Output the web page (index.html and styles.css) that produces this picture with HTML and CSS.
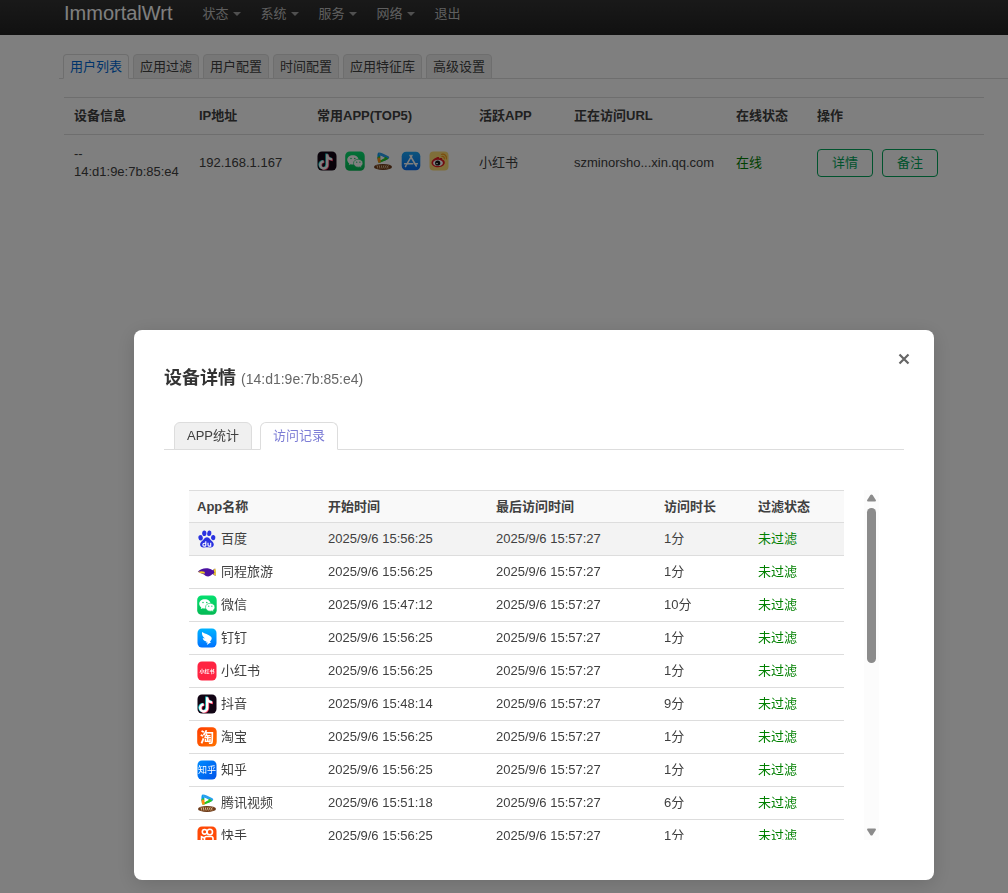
FILE: index.html
```html
<!DOCTYPE html>
<html lang="zh-CN">
<head>
<meta charset="utf-8">
<title>ImmortalWrt</title>
<link rel="stylesheet" href="styles.css">
</head>
<body>
<svg width="0" height="0" class="defs" aria-hidden="true">
  <defs>
    <linearGradient id="g-green" x2="0" y2="1"><stop stop-color="#05e070"/><stop offset="1" stop-color="#04b954"/></linearGradient>
    <linearGradient id="g-blue" x2="0" y2="1"><stop stop-color="#19a9fb"/><stop offset="1" stop-color="#0a6cf0"/></linearGradient>
    <linearGradient id="g-ding" x2="0" y2="1"><stop stop-color="#00b4ff"/><stop offset="1" stop-color="#0072ff"/></linearGradient>
    <linearGradient id="g-zhihu" y2="1"><stop stop-color="#008cff"/><stop offset="1" stop-color="#0052e8"/></linearGradient>
    <linearGradient id="g-orange" y2="1"><stop stop-color="#ff3c00"/><stop offset="1" stop-color="#ff7300"/></linearGradient>
    <symbol id="douyin" viewBox="0 0 20 20">
      <rect x=".5" y=".5" width="19" height="19" rx="4.500" fill="#120414"/>
      <g fill="none" stroke-width="1.900" transform="translate(-3.400 -1.800) scale(1.250)">
        <path d="M10.300 3.500v8.800a2.800 2.800 0 1 1-2.800-2.800M10.300 4.500c.5 1.800 2 3 4 3.100" stroke="#25e8e4"/>
        <path d="M11.500 4.500v8.400a2.800 2.800 0 1 1-2.800-2.800M11.500 5.500c.5 1.800 2 3 4 3.100" stroke="#f8305c"/>
        <path d="M10.900 4v8.600a2.800 2.800 0 1 1-2.800-2.800M10.900 5c.5 1.800 2 3 4 3.100" stroke="#fff"/>
      </g>
    </symbol>
    <symbol id="wechat" viewBox="0 0 20 20">
      <rect x=".2" y=".5" width="19.500" height="19.300" rx="4.500" fill="url(#g-green)"/>
      <g transform="translate(-.8 -1) scale(1.080)">
      <path d="M8 4.800c-3 0-5.200 1.900-5.200 4.300 0 1.400.8 2.600 1.900 3.400l-.5 1.500 1.900-.9c3.500.9 7.200-.8 7.200-4C13.300 6.700 11 4.800 8 4.800z" fill="#fff"/>
      <path d="M13 8.600c-2.500 0-4.400 1.600-4.400 3.600s1.900 3.700 4.400 3.700c.5 0 1-.1 1.500-.2l1.500.8-.4-1.300c1-.7 1.700-1.800 1.700-3 0-2-1.900-3.600-4.300-3.600z" fill="#fff" stroke="#10c864" stroke-width=".6"/>
      <g fill="#10c864"><circle cx="6.300" cy="7.900" r=".7"/><circle cx="9.800" cy="7.900" r=".7"/><circle cx="11.600" cy="11.300" r=".6"/><circle cx="14.500" cy="11.300" r=".6"/></g>
      </g>
    </symbol>
    <symbol id="txvideo" viewBox="0 0 20 20">
      <path d="M5.500 1.500Q4 2 4.500 8l3 .5V4.800z" fill="#0a9bf2"/>
      <path d="M5.500 1.500q2-.8 10 3.700 1.600 1.300 0 2.600L11.500 10l-1.800-2 2.300-1.200L7 4.500z" fill="#28a0ee"/>
      <path d="M4.500 6q0 4 1 5.700 2 .5 10-4l-3-2L7.500 9V5z" fill="#2ac824"/>
      <path d="M4.500 6.500q0 4 1 5.200l2.200-.5V7z" fill="#ff8b14"/>
      <path d="M7.500 4.800 11.800 6.900 7.500 9.300z" fill="#fff"/>
      <ellipse cx="10" cy="15.900" rx="9" ry="3" fill="#6b3918"/>
      <path d="M3.200 14.800h13.600M3.800 17h12.400" stroke="#c99a68" stroke-width="1" stroke-dasharray="1.500 .8"/>
      <path d="M4 15.900h12" stroke="#fff0cf" stroke-width="1" stroke-dasharray="1 1"/>
    </symbol>
    <symbol id="appstore" viewBox="0 0 20 20">
      <rect x=".7" y=".7" width="18.600" height="18.600" rx="4.500" fill="url(#g-blue)"/>
      <path d="M9 4.300 10 6M11 4.300 5.700 13.400M10 6l5.300 9M3.700 12.800h7.800M13.300 12.800h3M5 14.700l-.5.800" fill="none" stroke="#fff" stroke-width="1.500" stroke-linecap="round"/>
    </symbol>
    <symbol id="weibo" viewBox="0 0 20 20">
      <rect x=".5" y=".5" width="19" height="19" rx="4" fill="#ffdc73"/>
      <path d="M8 6.200c1.500-.7 2.500-.2 2.200 1.200 2-.9 3.600-.5 3 1.200 1.700.5 2.600 1.500 2.600 2.900 0 2.600-3 4.700-6.700 4.700s-6.600-1.800-6.600-4.500C2.500 9.500 5.500 7.200 8 6.200z" fill="#e31b22"/>
      <ellipse cx="9" cy="11.900" rx="4.900" ry="3.200" fill="#fff"/>
      <circle cx="8.700" cy="12" r="2.600" fill="#111"/><circle cx="8" cy="12.500" r=".8" fill="#fff"/>
      <path d="M12.700 3.300c3-.5 5.200 1.600 4.700 4.700M12.900 5.500c1.700-.2 2.700.8 2.400 2.300" fill="none" stroke="#f59a1b" stroke-width="1.200" stroke-linecap="round"/>
    </symbol>
    <symbol id="baidu" viewBox="0 0 20 20">
      <g fill="#2a32e0">
        <ellipse cx="3.600" cy="8.800" rx="2.200" ry="2.700" transform="rotate(-12 3.600 8.800)"/><ellipse cx="7.300" cy="4.300" rx="2.100" ry="2.800"/>
        <ellipse cx="12.300" cy="4.300" rx="2.100" ry="2.800" transform="rotate(10 12.300 4.300)"/><ellipse cx="16.200" cy="8.600" rx="2.200" ry="2.700" transform="rotate(8 16.200 8.600)"/>
        <path d="M10 8.200c1.600 0 2.500 1.300 3.500 2.500 1.200 1.400 3.300 2.500 3.300 4.700s-1.700 3.100-3.500 3c-1 0-2.200-.2-3.300-.2s-2.300.2-3.300.2c-1.900.1-3.600-.8-3.600-3s2.100-3.300 3.300-4.700c1-1.200 2-2.500 3.600-2.500z"/>
      </g>
      <path d="M8.800 12.300v4.800M8.800 14.200H7.200q-1.300 0-1.300 1.500t1.300 1.400h1.600M11 13.800v2.200q0 1.100 1 1.100h1.700v-3.300" fill="none" stroke="#fff" stroke-width="1.100"/>
    </symbol>
    <symbol id="tongcheng" viewBox="0 0 20 20">
      <path d="M.8 9.700C4 6 11 5 15.500 8.200L18 6.500q.8 3.500.5 7.500l-3-2c-3 3.500-6.500 2.700-8.500.4Q4 11.500.8 9.700z" fill="#4c12a1"/>
      <path d="M1 9.700c3-.6 4.500-.7 6.500.1L8 11.500q-4 .5-7-1.800zM16.500 7.700 18.500 6.500q.6 3.500.3 7.500l-2.800-2 1.500-1z" fill="#eecd27"/>
    </symbol>
    <symbol id="dingtalk" viewBox="0 0 20 20">
      <rect x=".5" y=".5" width="19" height="19" rx="4.500" fill="url(#g-ding)"/>
      <path d="M5 4c3.500 2.200 9.200 3 9.700 6.100.2 1.400-1 2.800-1.900 3.800h1.500l-4.500 3 .9-2.300H8.600l1-1.200C7 13 6 11.700 5.700 9.900l2.200.5C5.500 8.700 4.700 6.500 5 4z" fill="#fff"/>
    </symbol>
    <symbol id="kuaishou" viewBox="0 0 20 20">
      <rect x=".5" y=".5" width="19" height="19" rx="4.500" fill="#ff4906"/>
      <g fill="none" stroke="#fff" stroke-width="1.600"><circle cx="7.600" cy="5.800" r="2.300"/><circle cx="12.800" cy="6" r="2.700"/><rect x="7.500" y="10.500" width="8.500" height="6" rx="2"/><path d="M7.500 12 4.500 10.800v5L7.500 15"/></g>
    </symbol>
  </defs>
</svg>

<header class="topbar">
  <a class="brand" href="#">ImmortalWrt</a>
  <nav class="menu">
    <a class="caret" href="#">状态</a>
    <a class="caret" href="#">系统</a>
    <a class="caret" href="#">服务</a>
    <a class="caret" href="#">网络</a>
    <a href="#">退出</a>
  </nav>
</header>

<main class="page">
  <nav class="tabs">
    <a class="tab active" href="#">用户列表</a>
    <a class="tab" href="#">应用过滤</a>
    <a class="tab" href="#">用户配置</a>
    <a class="tab" href="#">时间配置</a>
    <a class="tab" href="#">应用特征库</a>
    <a class="tab" href="#">高级设置</a>
  </nav>
  <table class="devices">
    <colgroup><col class="c-device"><col class="c-ip"><col class="c-url"><col class="c-app"><col class="c-url"><col class="c-state"><col></colgroup>
    <thead>
      <tr><th>设备信息</th><th>IP地址</th><th>常用APP(TOP5)</th><th>活跃APP</th><th>正在访问URL</th><th>在线状态</th><th>操作</th></tr>
    </thead>
    <tbody>
      <tr>
        <td>--<br>14:d1:9e:7b:85:e4</td>
        <td>192.168.1.167</td>
        <td><div class="apps">
          <svg class="icon"><use href="#douyin"/></svg>
          <svg class="icon"><use href="#wechat"/></svg>
          <svg class="icon"><use href="#txvideo"/></svg>
          <svg class="icon"><use href="#appstore"/></svg>
          <svg class="icon"><use href="#weibo"/></svg>
        </div></td>
        <td>小红书</td>
        <td>szminorsho...xin.qq.com</td>
        <td class="online">在线</td>
        <td><div class="actions"><button class="btn" type="button">详情</button><button class="btn" type="button">备注</button></div></td>
      </tr>
    </tbody>
  </table>
</main>

<div class="overlay">
  <section class="modal" role="dialog" aria-labelledby="modal-title">
    <button class="close" type="button" aria-label="关闭"><svg width="12" height="12" viewBox="0 0 12 12"><path d="M1.500 1.500l9 9M10.500 1.500l-9 9" stroke="#666" stroke-width="2.200"/></svg></button>
    <h2 class="title" id="modal-title">设备详情 <small>(14:d1:9e:7b:85:e4)</small></h2>
    <div class="subtabs" role="tablist">
      <button class="subtab" type="button" role="tab">APP统计</button>
      <button class="subtab active" type="button" role="tab" aria-selected="true">访问记录</button>
    </div>
    <div class="scroller">
      <div class="view">
        <table class="records">
          <colgroup><col class="r-app"><col class="r-time"><col class="r-time"><col class="r-span"><col></colgroup>
          <thead><tr><th>App名称</th><th>开始时间</th><th>最后访问时间</th><th>访问时长</th><th>过滤状态</th></tr></thead>
          <tbody>
            <tr class="hover"><td><span class="app"><svg class="icon"><use href="#baidu"/></svg>百度</span></td><td>2025/9/6 15:56:25</td><td>2025/9/6 15:57:27</td><td>1分</td><td class="pass">未过滤</td></tr>
            <tr><td><span class="app"><svg class="icon"><use href="#tongcheng"/></svg>同程旅游</span></td><td>2025/9/6 15:56:25</td><td>2025/9/6 15:57:27</td><td>1分</td><td class="pass">未过滤</td></tr>
            <tr><td><span class="app"><svg class="icon"><use href="#wechat"/></svg>微信</span></td><td>2025/9/6 15:47:12</td><td>2025/9/6 15:57:27</td><td>10分</td><td class="pass">未过滤</td></tr>
            <tr><td><span class="app"><svg class="icon"><use href="#dingtalk"/></svg>钉钉</span></td><td>2025/9/6 15:56:25</td><td>2025/9/6 15:57:27</td><td>1分</td><td class="pass">未过滤</td></tr>
            <tr><td><span class="app"><svg class="icon" viewBox="0 0 20 20"><rect x=".5" y=".5" width="19" height="19" rx="4.500" fill="#ff2442"/><text class="logo" x="10" y="12" font-size="5">小红书</text></svg>小红书</span></td><td>2025/9/6 15:56:25</td><td>2025/9/6 15:57:27</td><td>1分</td><td class="pass">未过滤</td></tr>
            <tr><td><span class="app"><svg class="icon"><use href="#douyin"/></svg>抖音</span></td><td>2025/9/6 15:48:14</td><td>2025/9/6 15:57:27</td><td>9分</td><td class="pass">未过滤</td></tr>
            <tr><td><span class="app"><svg class="icon" viewBox="0 0 20 20"><rect x=".2" y=".3" width="19.500" height="19.300" rx="4.500" fill="url(#g-orange)"/><text class="logo" x="10" y="15" font-size="14">淘</text></svg>淘宝</span></td><td>2025/9/6 15:56:25</td><td>2025/9/6 15:57:27</td><td>1分</td><td class="pass">未过滤</td></tr>
            <tr><td><span class="app"><svg class="icon" viewBox="0 0 20 20"><rect x=".5" y=".5" width="19" height="19" rx="4.500" fill="url(#g-zhihu)"/><text class="logo thin" x="10" y="13" font-size="9">知乎</text></svg>知乎</span></td><td>2025/9/6 15:56:25</td><td>2025/9/6 15:57:27</td><td>1分</td><td class="pass">未过滤</td></tr>
            <tr><td><span class="app"><svg class="icon"><use href="#txvideo"/></svg>腾讯视频</span></td><td>2025/9/6 15:51:18</td><td>2025/9/6 15:57:27</td><td>6分</td><td class="pass">未过滤</td></tr>
            <tr><td><span class="app"><svg class="icon"><use href="#kuaishou"/></svg>快手</span></td><td>2025/9/6 15:56:25</td><td>2025/9/6 15:57:27</td><td>1分</td><td class="pass">未过滤</td></tr>
          </tbody>
        </table>
      </div>
      <div class="bar" aria-hidden="true">
        <svg width="9" height="8" viewBox="0 0 9 8"><path d="M4.500.5Q5.200.5 5.600 1L8.800 6Q9.300 7.300 8 7.500H1Q-.3 7.300.2 6L3.400 1Q3.800.5 4.500.5z" fill="#8b8b8b"/></svg>
        <div class="track"><div class="thumb"></div></div>
        <svg width="9" height="8" viewBox="0 0 9 8"><path d="M4.500 7.500Q5.200 7.500 5.600 7L8.800 2Q9.300.7 8 .5H1Q-.3.7.2 2L3.400 7Q3.800 7.500 4.500 7.500z" fill="#8b8b8b"/></svg>
      </div>
    </div>
  </section>
</div>
</body>
</html>
```

FILE: styles.css
```css
* { box-sizing: border-box; }

body {
  margin: 0;
  background: #fff;
  color: #404040;
  font: 13px/18px "Liberation Sans", "Noto Sans CJK SC", sans-serif;
}

a { text-decoration: none; }
button { font: inherit; }
.defs { position: absolute; }

.topbar {
  display: flex;
  height: 35px;
  padding: 0 64px;
  background: linear-gradient(#333, #222);
}
.brand {
  color: #fff;
  font-size: 20px;
  line-height: 26px;
}
.menu {
  display: flex;
  gap: 20px;
  padding-left: 30px;
  line-height: 28px;
}
.menu a {
  display: flex;
  align-items: center;
  gap: 4px;
  height: 28px;
  color: #bfbfbf;
}
.caret::after {
  content: "";
  border: 4px solid transparent;
  border-top-color: #a0a0a0;
  border-bottom: 0;
}

.page { padding-top: 19px; }
.tabs {
  display: flex;
  gap: 4px;
  margin-left: 59px;
  padding-left: 4px;
  border-bottom: 1px solid #ddd;
}
.tab {
  height: 25px;
  margin-bottom: -1px;
  padding: 0 6px;
  border: 1px solid #ddd;
  border-radius: 4px 4px 0 0;
  background: #efefef;
  color: #404040;
  line-height: 24px;
}
.tab.active {
  border-bottom-color: #fff;
  background: #fff;
  color: #0069d6;
}

table {
  width: 100%;
  border-collapse: collapse;
  table-layout: fixed;
  text-align: left;
}
.devices {
  width: auto;
  min-width: calc(100% - 88px);
  margin: 18px 24px 0 64px;
}
.devices th {
  height: 37px;
  padding: 0 10px;
  border-top: 1px solid #ddd;
  border-bottom: 1px solid #ddd;
}
.devices td { padding: 10px; }
.c-device { width: 125px; }
.c-ip { width: 118px; }
.c-url { width: 162px; }
.c-app { width: 95px; }
.c-state { width: 81px; }
.icon {
  display: block;
  flex: none;
  width: 20px;
  height: 20px;
}
.apps {
  display: flex;
  gap: 8px;
  padding-bottom: 4px;
}
.actions {
  display: flex;
  gap: 9px;
}
.online { color: #008000; }
.btn {
  width: 56px;
  height: 28px;
  padding: 0;
  border: 1px solid #00a65a;
  border-radius: 4px;
  background: none;
  color: #00a65a;
}

.overlay {
  position: fixed;
  inset: 0;
  padding: 330px 64px 13px 124px;
  background: rgba(0, 0, 0, .5);
}
.modal {
  position: relative;
  max-width: 800px;
  margin: 0 10px;
  padding: 30px 30px 40px;
  border-radius: 8px;
  background: #fff;
  box-shadow: 0 4px 20px rgba(0, 0, 0, .15);
}
.close {
  position: absolute;
  top: 19px;
  right: 20px;
  display: grid;
  place-items: center;
  width: 20px;
  height: 20px;
  padding: 0;
  border: 0;
  background: none;
}
.title {
  margin: 0;
  color: #333;
  font-size: 18px;
  line-height: 36px;
}
.title small {
  color: #666;
  font-size: 14px;
  font-weight: normal;
}
.subtabs {
  display: flex;
  gap: 8px;
  margin-top: 25px;
  padding-left: 10px;
  border-bottom: 1px solid #ddd;
}
.subtab {
  width: 78px;
  height: 28px;
  margin-bottom: -1px;
  padding: 0;
  border: 1px solid #ddd;
  border-radius: 6px 6px 0 0;
  background: #f0f0f0;
  color: #404040;
}
.subtab.active {
  border-bottom-color: #fff;
  background: #fff;
  color: #7d7dd6;
}

.scroller {
  display: flex;
  gap: 20px;
  height: 350px;
  margin: 40px 25px 0;
}
.view {
  flex: 1;
  overflow: hidden;
}
.records th, .records td {
  height: 33px;
  padding: 0 8px;
  border-bottom: 1px solid #ddd;
}
.records th {
  height: 32px;
  border-top: 1px solid #ddd;
  background: #f9f9f9;
}
.hover { background: #f3f3f3; }
.r-app { width: 131px; }
.r-time { width: 168px; }
.r-span { width: 94px; }
.app {
  display: flex;
  align-items: center;
  gap: 4px;
}
.pass { color: #008000; }
.logo {
  fill: #fff;
  font-family: "Noto Sans CJK SC", sans-serif;
  font-weight: bold;
  text-anchor: middle;
}
.thin { font-weight: normal; }
.bar {
  display: flex;
  flex-direction: column;
  align-items: center;
  gap: 6px;
  width: 15px;
  padding: 4px 0;
  background: #fcfcfc;
}
.track { flex: 1; }
.thumb {
  width: 9px;
  height: 155px;
  border-radius: 5px;
  background: #8b8b8b;
}
```
